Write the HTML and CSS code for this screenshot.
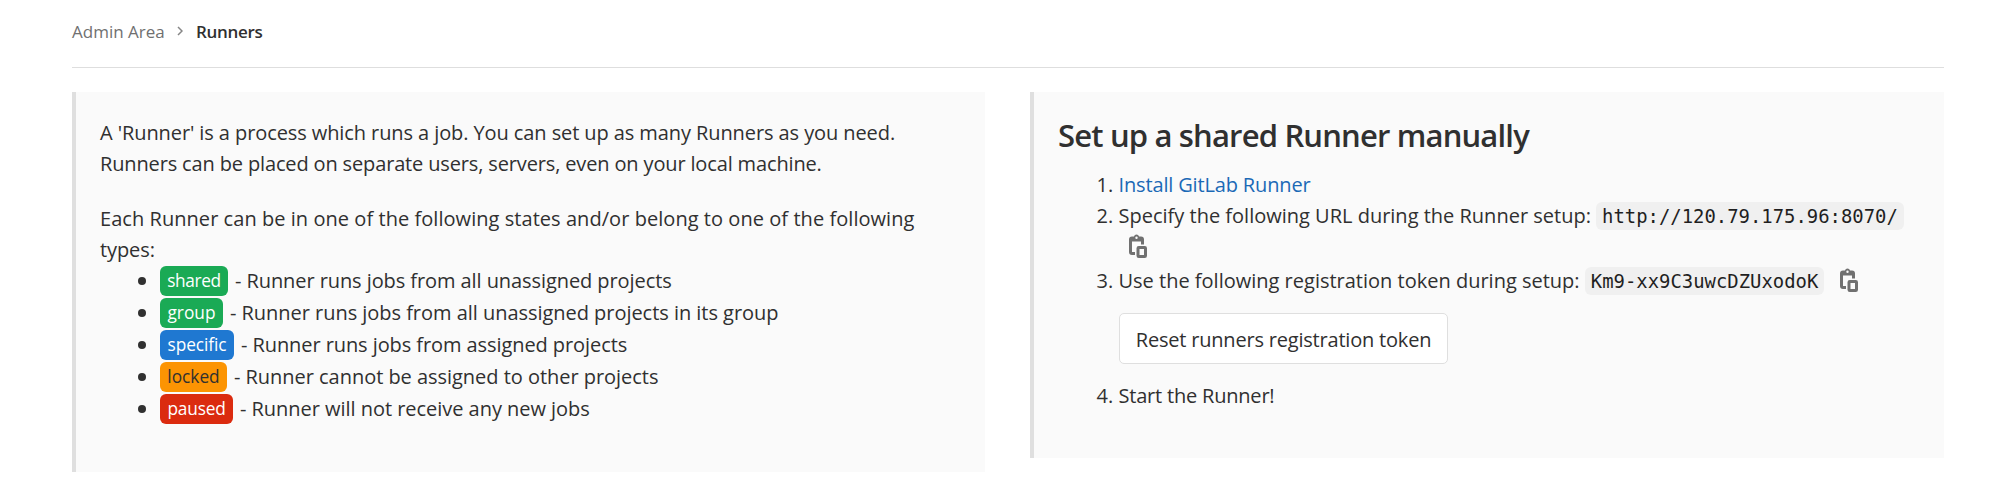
FILE: index.html
```html
<!DOCTYPE html>
<html lang="en">
<head>
<meta charset="utf-8">
<title>Runners · Admin Area</title>
<link rel="stylesheet" href="styles.css">
</head>
<body>
<svg class="sprite" aria-hidden="true">
  <symbol id="copy" viewBox="0 0 16 16">
    <path fill-rule="evenodd" d="M5.3 1.600a1.800 1.800 0 0 1 3.400 0H10a2 2 0 0 1 2 2V7h-2V5H4v7h2v2H4a2 2 0 0 1-2-2V3.600a2 2 0 0 1 2-2zM7 1.700a.8.8 0 1 0 0 1.600.8.8 0 0 0 0-1.600z"/>
    <path fill-rule="evenodd" d="M8.500 8h4A1.500 1.500 0 0 1 14 9.500v5a1.500 1.500 0 0 1-1.500 1.500h-4A1.500 1.500 0 0 1 7 14.500v-5A1.500 1.500 0 0 1 8.500 8zM9 10v4h3v-4z"/>
  </symbol>
</svg>
<nav class="breadcrumb">
  <a class="crumb">Admin Area</a>
  <svg class="chevron" viewBox="0 0 6 10"><path d="M1 1l4 4-4 4"/></svg>
  <span class="current">Runners</span>
</nav>
<main class="columns">
  <section class="card">
    <p><span class="l1">A 'Runner' is a process which runs a job. You can set up as many Runners as you need.</span><br><span class="l2">Runners can be placed on separate users, servers, even on your local machine.</span></p>
    <p><span class="l3">Each Runner can be in one of the following states and/or belong to one of the following</span><br><span class="l4">types:</span></p>
    <ul class="types">
      <li><span class="badge shared">shared</span><span class="text t1">- Runner runs jobs from all unassigned projects</span></li>
      <li><span class="badge group">group</span><span class="text t2">- Runner runs jobs from all unassigned projects in its group</span></li>
      <li><span class="badge specific">specific</span><span class="text t3">- Runner runs jobs from assigned projects</span></li>
      <li><span class="badge locked">locked</span><span class="text t2">- Runner cannot be assigned to other projects</span></li>
      <li><span class="badge paused">paused</span><span class="text t2">- Runner will not receive any new jobs</span></li>
    </ul>
  </section>
  <section class="card setup">
    <h4>Set up a shared Runner manually</h4>
    <ol>
      <li><a class="link">Install GitLab Runner</a></li>
      <li>Specify the following URL during the Runner setup: <code>http://120.79.175.96:8070/</code> <svg class="copy"><use href="#copy"/></svg></li>
      <li>Use the following registration token during setup: <code>Km9-xx9C3uwcDZUxodoK</code> <svg class="copy"><use href="#copy"/></svg>
        <button class="reset">Reset runners registration token</button></li>
      <li><span class="start">Start the Runner!</span></li>
    </ol>
  </section>
</main>
</body>
</html>
```

FILE: styles.css
```css
* { box-sizing: border-box; }
body {
  margin: 0;
  padding: 0 46px 0 72px;
  background: #fff;
  color: #303030;
  font: 20px/31px "Open Sans", "Noto Sans", sans-serif;
}
.sprite { display: none; }

.breadcrumb {
  display: flex;
  align-items: center;
  height: 68px;
  padding-bottom: 4px;
  border-bottom: 1px solid #dedede;
  font-size: 17px;
}
.crumb { width: 94px; color: #707070; white-space: nowrap; }
.chevron {
  width: 6px;
  height: 10px;
  margin: 0 13px 1px 11px;
  fill: none;
  stroke: #868686;
  stroke-width: 1.5;
}
.current { color: #303030; font-weight: 600; letter-spacing: -0.3px; }

.columns {
  display: grid;
  grid-template-columns: 913px 914px;
  column-gap: 45px;
  align-items: start;
  padding-top: 24px;
}
.card {
  height: 380px;
  padding: 25px 24px 0;
  border-left: 4px solid #dfdfdf;
  background: #fafafa;
}
.card p { margin: 0 0 24px; white-space: nowrap; }
.card p:nth-of-type(2) { margin-bottom: 0; }
.l1 { letter-spacing: -0.09px; }
.l2 { letter-spacing: -0.145px; }
.l3 { letter-spacing: 0.05px; }
.l4 { letter-spacing: -0.1px; }

.types { margin: 0; padding: 0 0 0 38px; list-style: none; }
.types li { display: flex; align-items: center; height: 32px; white-space: nowrap; }
.types li::before {
  content: "";
  width: 8px;
  height: 8px;
  margin-right: 14px;
  border-radius: 50%;
  background: #303030;
}
.text { padding-bottom: 2px; }
.t1 { letter-spacing: -0.08px; }
.t2 { letter-spacing: -0.035px; }
.t3 { letter-spacing: -0.08px; }
.badge {
  height: 30px;
  margin-right: 7px;
  border-radius: 6px;
  color: #fff;
  font-size: 17.3px;
  line-height: 30px;
  text-align: center;
}
.shared { width: 68px; background: #1aaa55; letter-spacing: -0.35px; }
.group { width: 63px; background: #1aaa55; }
.specific { width: 74px; background: #1f78d1; letter-spacing: -0.1px; }
.locked { width: 67px; background: #fc9403; color: #303030; }
.paused { width: 73px; background: #db2b0f; letter-spacing: -0.2px; }

.setup { height: 366px; padding-top: 22px; }
.setup h4 {
  margin: 0 0 13px;
  font-size: 31px;
  line-height: 42px;
  font-weight: 600;
  letter-spacing: -0.83px;
}
.setup ol { margin: 0; padding: 0 0 0 60.5px; }
.link { color: #1b69b6; letter-spacing: -0.15px; }
.start { letter-spacing: -0.2px; }
code {
  padding: 3px 6px;
  border-radius: 6px;
  background: #f0f0f0;
  color: #1f1f1f;
  font: 18.9px/20px "DejaVu Sans Mono", monospace;
}
.copy {
  width: 24px;
  height: 24px;
  margin: 3px 0 7px 7.5px;
  vertical-align: -11px;
  fill: #707070;
}
.reset {
  display: block;
  width: 329px;
  height: 51px;
  margin: 14px 0 16px 0.5px;
  padding: 1px 0 0;
  border: 1px solid #dfdfdf;
  border-radius: 5px;
  background: #fff;
  color: #303030;
  font: inherit;
  letter-spacing: -0.2px;
  white-space: nowrap;
}
```
